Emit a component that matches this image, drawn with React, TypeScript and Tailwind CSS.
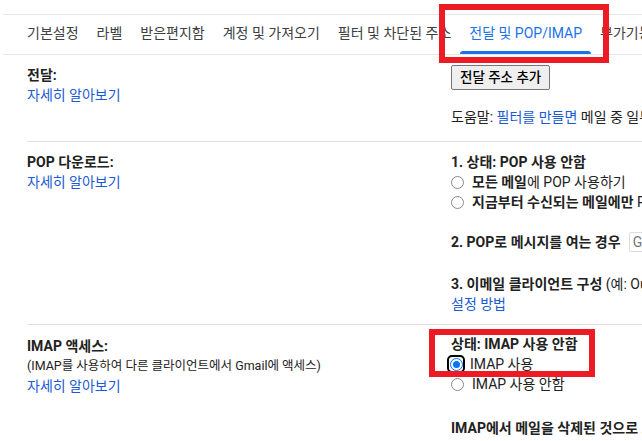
import type { ReactNode } from 'react';

const tabs = ['기본설정', '라벨', '받은편지함', '계정 및 가져오기', '필터 및 차단된 주소', '전달 및 POP/IMAP', '부가기능'];
const ACTIVE = '전달 및 POP/IMAP';

function Radio({ checked, focused }: { checked?: boolean; focused?: boolean }) {
    if (checked) {
        return (
            <span
                className={
                    'ml-[-4px] mr-[5px] flex h-[18px] w-[18px] shrink-0 items-center justify-center rounded-[5px] ' +
                    (focused ? 'border-2 border-black' : '')
                }
            >
                <span className="flex h-[13px] w-[13px] items-center justify-center rounded-full border-[1.5px] border-[#0075ff] bg-white">
                    <span className="h-[7px] w-[7px] rounded-full bg-[#0075ff]" />
                </span>
            </span>
        );
    }
    return <span className="mr-[8px] h-[13px] w-[13px] shrink-0 rounded-full border border-[#8a8a8a] bg-white" />;
}

function Row({ children, className = '' }: { children: ReactNode; className?: string }) {
    return <div className={'flex h-[20px] items-center whitespace-nowrap leading-[20px] ' + className}>{children}</div>;
}

function Link({ children }: { children: ReactNode }) {
    return <span className="text-[#1a5bd4]">{children}</span>;
}

export default function App() {
    return (
        <div
            className="relative h-[441px] w-[642px] overflow-hidden bg-white text-[14px] text-[#222]"
            style={{ fontFamily: 'Roboto, "Noto Sans CJK KR", sans-serif' }}
        >
            {/* 탭 바 */}
            <div className="pt-[14px]">
                <div className="ml-[3px] flex h-[41px] border-y border-[#e6e6e6] pl-[15px]">
                    {tabs.map((t) => (
                        <div
                            key={t}
                            className={
                                'relative whitespace-nowrap px-[9px] pt-[8px] leading-[20px] ' +
                                (t === ACTIVE ? 'text-[#1a73e8]' : 'text-[#3c4043]')
                            }
                        >
                            {t}
                            {t === ACTIVE && (
                                <span className="absolute bottom-0 left-0 right-0 h-[3px] rounded-t-[3px] bg-[#1a73e8]" />
                            )}
                        </div>
                    ))}
                </div>
            </div>

            <div className="ml-[27px]">
                {/* 전달 */}
                <div className="grid grid-cols-[424px_1fr] border-b border-[#e0e0e0] pb-[14px] pt-[10px]">
                    <div>
                        <Row className="font-bold">전달:</Row>
                        <Row>
                            <Link>자세히 알아보기</Link>
                        </Row>
                    </div>
                    <div>
                        <button className="flex h-[25px] items-center rounded-[2px] border border-[#767676] bg-[#efefef] px-[8px] text-[13.5px] font-medium text-black">
                            전달 주소 추가
                        </button>
                        <Row className="mt-[17px]">
                            도움말:&nbsp;<Link>필터를 만들면</Link>&nbsp;메일 중 일부만 전달할 수 있습니다.
                        </Row>
                    </div>
                </div>

                {/* POP 다운로드 */}
                <div className="grid grid-cols-[424px_1fr] border-b border-[#e0e0e0] pb-[10px] pt-[10px]">
                    <div>
                        <Row className="font-bold">POP 다운로드:</Row>
                        <Row>
                            <Link>자세히 알아보기</Link>
                        </Row>
                    </div>
                    <div>
                        <Row className="font-bold">1. 상태: POP 사용 안함</Row>
                        <Row>
                            <Radio />
                            <b>모든 메일</b>에 POP 사용하기
                        </Row>
                        <Row>
                            <Radio />
                            <b>지금부터 수신되는 메일에만</b>&nbsp;POP 사용하기
                        </Row>
                        <Row className="mt-[20px]">
                            <b>2. POP로 메시지를 여는 경우</b>
                            <span className="ml-[8px] flex h-[20px] items-center rounded-[2px] border border-[#dadce0] px-[3px] text-[#777]">
                                Gmail 사본을 받은편지함에 보관하기
                            </span>
                        </Row>
                        <Row className="mt-[22px]">
                            <b>3. 이메일 클라이언트 구성</b>&nbsp;(예: Outlook, Eudora, Netscape Mail)
                        </Row>
                        <Row>
                            <Link>설정 방법</Link>
                        </Row>
                    </div>
                </div>

                {/* IMAP 액세스 */}
                <div className="grid grid-cols-[424px_1fr]">
                    <div className="pt-[11px]">
                        <Row className="font-bold">IMAP 액세스:</Row>
                        <Row className="text-[12.5px]">(IMAP를 사용하여 다른 클라이언트에서 Gmail에 액세스)</Row>
                        <Row>
                            <Link>자세히 알아보기</Link>
                        </Row>
                    </div>
                    <div className="pt-[9px]">
                        <Row className="font-bold">상태: IMAP 사용 안함</Row>
                        <Row>
                            <Radio checked focused />
                            IMAP 사용
                        </Row>
                        <Row>
                            <Radio />
                            IMAP 사용 안함
                        </Row>
                        <Row className="mt-[24px] font-bold">IMAP에서 메일을 삭제된 것으로 표시하는 경우:</Row>
                    </div>
                </div>
            </div>

            {/* 강조 표시 */}
            <div className="pointer-events-none absolute left-[439px] top-[4px] h-[59px] w-[170px] border-[6px] border-[#ed1c24]" />
            <div className="pointer-events-none absolute left-[429px] top-[329px] h-[48px] w-[166px] border-[6px] border-[#ed1c24]" />
        </div>
    );
}
